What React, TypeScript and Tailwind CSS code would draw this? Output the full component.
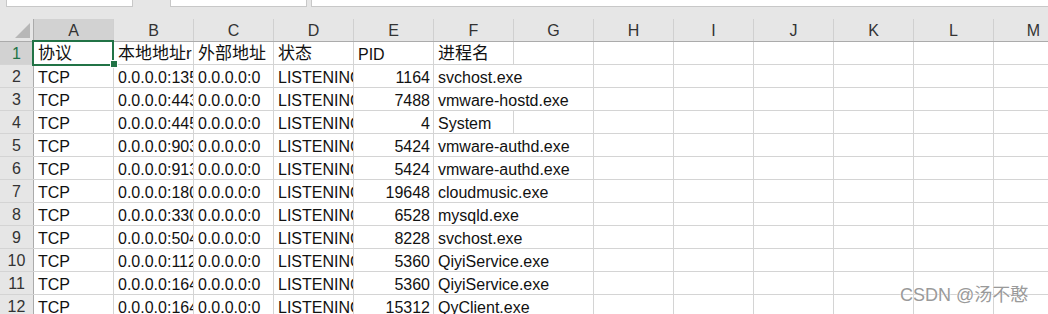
import React from "react";

const COLS = ["A", "B", "C", "D", "E", "F", "G", "H", "I", "J", "K", "L", "M"];

type Row = [string, string, string, string, string, string];

const DATA: Row[] = [
  ["协议", "本地地址r", "外部地址", "状态", "PID", "进程名"],
  ["TCP", "0.0.0.0:135", "0.0.0.0:0", "LISTENING", "1164", "svchost.exe"],
  ["TCP", "0.0.0.0:443", "0.0.0.0:0", "LISTENING", "7488", "vmware-hostd.exe"],
  ["TCP", "0.0.0.0:445", "0.0.0.0:0", "LISTENING", "4", "System"],
  ["TCP", "0.0.0.0:903", "0.0.0.0:0", "LISTENING", "5424", "vmware-authd.exe"],
  ["TCP", "0.0.0.0:913", "0.0.0.0:0", "LISTENING", "5424", "vmware-authd.exe"],
  ["TCP", "0.0.0.0:180", "0.0.0.0:0", "LISTENING", "19648", "cloudmusic.exe"],
  ["TCP", "0.0.0.0:330", "0.0.0.0:0", "LISTENING", "6528", "mysqld.exe"],
  ["TCP", "0.0.0.0:504", "0.0.0.0:0", "LISTENING", "8228", "svchost.exe"],
  ["TCP", "0.0.0.0:112", "0.0.0.0:0", "LISTENING", "5360", "QiyiService.exe"],
  ["TCP", "0.0.0.0:164", "0.0.0.0:0", "LISTENING", "5360", "QiyiService.exe"],
  ["TCP", "0.0.0.0:164", "0.0.0.0:0", "LISTENING", "15312", "QyClient.exe"],
];

const FONT = "font-['Liberation_Sans','Noto_Sans_CJK_SC',sans-serif]";

function Cell({
  text,
  right,
  wide,
  cjk,
}: {
  text?: string;
  right?: boolean;
  wide?: boolean;
  cjk?: boolean;
}) {
  return (
    <div
      className={`${wide ? "w-[160px]" : "w-[80px]"} shrink-0 h-full border-r border-[#d4d4d4] overflow-hidden whitespace-nowrap flex items-end ${
        right ? "justify-end pr-[3px]" : "pl-[4px]"
      }`}
    >
      <span
        className={`${cjk ? "text-[17px] leading-[20px]" : "text-[16px] leading-[18px]"} text-[#111]`}
      >
        {text}
      </span>
    </div>
  );
}

export default function App() {
  return (
    <div className={`relative w-[1048px] h-[314px] overflow-hidden bg-white ${FONT}`}>
      {/* top toolbar strip */}
      <div className="h-[19px] bg-[#e6e6e6] flex items-start">
        <div className="ml-[6px] w-[127px] h-[7px] bg-white border-x border-b border-[#c8c8c8]" />
        <div className="ml-[37px] w-[137px] h-[7px] bg-white border-x border-b border-[#c8c8c8]" />
        <div className="ml-[4px] flex-1 h-[7px] bg-white border-l border-b border-[#c8c8c8]" />
      </div>

      {/* column header row */}
      <div className="h-[23px] flex bg-[#e6e6e6] border-b border-[#ababab]">
        <div className="w-[34px] shrink-0 h-full border-r border-[#ababab] relative">
          <svg className="absolute left-[15px] top-[4px]" width="15" height="15" viewBox="0 0 15 15">
            <polygon points="15,0 15,15 0,15" fill="#b7b7b7" />
          </svg>
        </div>
        {COLS.map((c, i) => (
          <div
            key={c}
            className={`w-[80px] shrink-0 h-full border-r border-[#d0d0d0] flex items-center justify-center text-[16px] leading-none text-[#333] ${
              i === 0 ? "bg-[#d2d2d2]" : ""
            }`}
          >
            <span className="pt-[2px]">{c}</span>
          </div>
        ))}
      </div>

      {/* data rows */}
      {DATA.map((r, ri) => {
        const isHead = ri === 0;
        const fOverflow = !isHead && r[5] !== "System";
        return (
          <div key={ri} className="h-[23px] flex border-b border-[#d4d4d4]">
            <div
              className={`w-[34px] shrink-0 h-full border-r border-[#ababab] flex items-center justify-center text-[16px] leading-none ${
                isHead ? "bg-[#d2d2d2] text-[#217346]" : "bg-[#e6e6e6] text-[#333]"
              }`}
            >
              <span className="pt-[2px]">{ri + 1}</span>
            </div>
            <Cell text={r[0]} cjk={isHead} />
            <Cell text={r[1]} cjk={isHead} />
            <Cell text={r[2]} cjk={isHead} />
            <Cell text={r[3]} cjk={isHead} />
            <Cell text={r[4]} right={!isHead} />
            {fOverflow ? (
              <Cell text={r[5]} wide />
            ) : (
              <>
                <Cell text={r[5]} cjk={isHead} />
                <Cell />
              </>
            )}
            {["H", "I", "J", "K", "L", "M"].map((c) => (
              <Cell key={c} />
            ))}
          </div>
        );
      })}

      {/* active cell selection A1 */}
      <div className="absolute left-[32px] top-[40px] w-[82px] h-[26px] border-2 border-[#217346] pointer-events-none" />
      <div className="absolute left-[111px] top-[61px] w-[6px] h-[6px] bg-[#217346] outline outline-1 outline-white" />

      {/* watermark */}
      <div className="absolute left-[900px] top-[284px] text-[18px] leading-[22px] text-[#9a9a9a] [text-shadow:0_0_1px_#fff,0_0_2px_#fff] whitespace-nowrap">
        CSDN @汤不憨
      </div>
    </div>
  );
}
